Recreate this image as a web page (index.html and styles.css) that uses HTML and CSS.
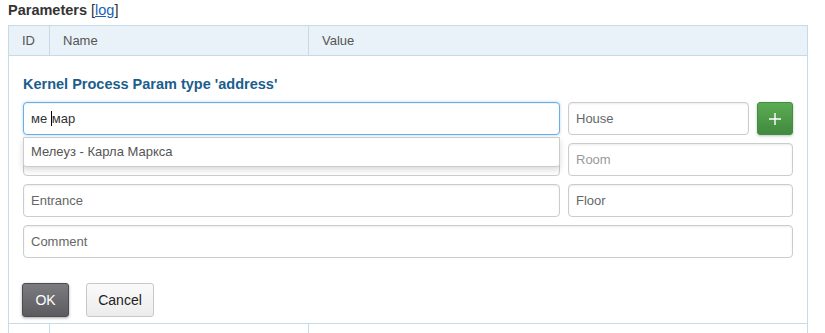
FILE: index.html
```html
<!DOCTYPE html>
<html lang="en">
<head>
    <meta charset="UTF-8">
    <title>Parameters</title>
    <link rel="stylesheet" href="styles.css">
</head>
<body>
    <div class="section-title">Parameters <span class="log">[<a href="#">log</a>]</span></div>

    <table class="params">
        <thead>
            <tr>
                <th class="col-id">ID</th>
                <th class="col-name">Name</th>
                <th>Value</th>
            </tr>
        </thead>
        <tbody>
            <tr>
                <td colspan="3" class="edit-cell">
                    <div class="form-title">Kernel Process Param type 'address'</div>
                    <div class="address-form">
                        <div class="street-wrap">
                            <div class="field focused">ме <span class="caret"></span>мар</div>
                            <ul class="suggest">
                                <li>Мелеуз - Карла Маркса</li>
                            </ul>
                        </div>
                        <input class="field" type="text" placeholder="House">
                        <button class="btn-add" type="button">
                            <svg width="14" height="14" viewBox="0 0 14 14"><path d="M7 1v12M1 7h12" stroke="#fff" stroke-width="1.4"/></svg>
                        </button>

                        <input class="field" type="text">
                        <input class="field field-wide light" type="text" placeholder="Room">

                        <input class="field" type="text" placeholder="Entrance">
                        <input class="field field-wide" type="text" placeholder="Floor">

                        <input class="field field-full" type="text" placeholder="Comment">
                    </div>
                    <div class="actions">
                        <button class="btn btn-ok" type="button">OK</button>
                        <button class="btn btn-cancel" type="button">Cancel</button>
                    </div>
                </td>
            </tr>
            <tr class="empty-row">
                <td class="col-id"></td>
                <td class="col-name"></td>
                <td></td>
            </tr>
        </tbody>
    </table>
</body>
</html>
```

FILE: styles.css
```css
body {
    margin: 0 8px;
    font-family: "Liberation Sans", Arial, sans-serif;
    font-size: 13px;
    color: #333;
    background: #fff;
}
.section-title {
    font-weight: bold;
    font-size: 14.5px;
    line-height: 20px;
    margin-bottom: 5px;
}
.section-title .log { font-weight: normal; }
.section-title a { color: #1a5fb4; }

.params {
    width: 799px;
    border-collapse: collapse;
    border: 1px solid #c6dbe7;
}
.params th {
    background: #e9f1f9;
    border: 1px solid #c6dbe7;
    font-weight: normal;
    color: #555;
    text-align: left;
    height: 29px;
    padding: 0 13px;
    font-size: 13px;
}
.params .col-id { width: 14px; }
.params .col-name { width: 232px; }
.empty-row td {
    border-left: 1px solid #c6dbe7;
    border-top: 1px solid #c6dbe7;
    height: 20px;
}

.edit-cell {
    padding: 19px 14px 6px 14px;
}
.form-title {
    font-weight: bold;
    font-size: 14.5px;
    color: #1b5d8c;
    line-height: 19px;
    margin-bottom: 8px;
}
.address-form {
    display: grid;
    grid-template-columns: 537px 181px 36px;
    column-gap: 8px;
    row-gap: 8px;
}
.address-form .field-wide { grid-column: 2 / span 2; }
.address-form .field-full { grid-column: 1 / -1; }

.field {
    box-sizing: border-box;
    height: 33px;
    width: 100%;
    padding: 0 7px;
    border: 1px solid #ccc;
    border-radius: 4px;
    box-shadow: inset 0 1px 2px rgba(0, 0, 0, 0.08);
    font-family: inherit;
    font-size: 13px;
    color: #333;
    background: #fff;
    line-height: 31px;
}
.field::placeholder { color: #666; }
.field.light::placeholder { color: #999; }
.field.focused {
    border-color: #66afe9;
    box-shadow: inset 0 1px 1px rgba(0, 0, 0, 0.06), 0 0 3px rgba(102, 175, 233, 0.5);
}
.caret {
    display: inline-block;
    width: 1px;
    height: 15px;
    background: #000;
    vertical-align: -3px;
}

.street-wrap { position: relative; }
.suggest {
    position: absolute;
    left: 0;
    right: 0;
    top: 35px;
    z-index: 2;
    margin: 0;
    padding: 0;
    list-style: none;
    background: #fff;
    border: 1px solid #ccc;
    border-radius: 0 0 3px 3px;
    box-shadow: 0 3px 6px rgba(0, 0, 0, 0.15);
}
.suggest li {
    height: 28px;
    line-height: 28px;
    padding: 0 7px;
    color: #555;
}

.btn-add {
    box-sizing: border-box;
    height: 33px;
    width: 36px;
    padding: 0;
    border: 1px solid #3f8f3f;
    border-radius: 3px;
    background: linear-gradient(#5cab53, #42893f);
    box-shadow: 0 1px 3px rgba(0, 0, 0, 0.25);
    display: flex;
    align-items: center;
    justify-content: center;
}

.actions {
    display: flex;
    gap: 17px;
    margin-top: 25px;
    margin-left: -1px;
}
.btn {
    box-sizing: border-box;
    height: 34px;
    font-family: inherit;
    font-size: 14px;
    border-radius: 3px;
    padding: 0;
}
.btn-ok {
    width: 47px;
    color: #fff;
    border: 1px solid #4c4c50;
    background: linear-gradient(#7c7c80, #5c5c60);
    box-shadow: 0 1px 3px rgba(0, 0, 0, 0.35);
}
.btn-cancel {
    width: 68px;
    color: #222;
    border: 1px solid #c8c8c8;
    background: linear-gradient(#fafafa, #ececec);
}
```
